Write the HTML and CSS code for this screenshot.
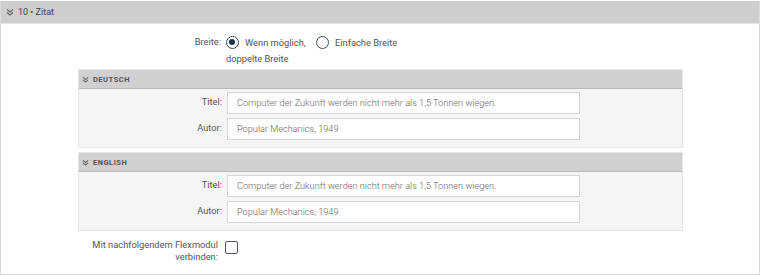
FILE: index.html
```html
<!DOCTYPE html>
<html lang="de">
  <head>
    <meta charset="UTF-8" />
    <meta name="viewport" content="width=device-width, initial-scale=1.0" />
    <title>Flexmodul Zitat</title>
    <link rel="stylesheet" href="styles.css">
  </head>
  <body>
    <div class="module">
      <div class="module-head">
        <svg class="chev" width="8" height="8" viewBox="0 0 8 8">
          <path d="M1 1.5 L4 4 L7 1.5 M1 4.5 L4 7 L7 4.5" fill="none" stroke="#666" stroke-width="1.1" />
        </svg>
        <span>10 • Zitat</span>
      </div>
      <div class="module-body">
        <div class="row row-width">
          <div class="label">Breite:</div>
          <div class="radios">
            <label class="option wide">
              <span class="radio checked"></span>Wenn möglich, doppelte Breite
            </label>
            <label class="option">
              <span class="radio"></span>Einfache Breite
            </label>
          </div>
        </div>

        <div class="lang">
          <div class="lang-head">
            <svg class="chev" width="7" height="7" viewBox="0 0 8 8">
              <path d="M1 1.5 L4 4 L7 1.5 M1 4.5 L4 7 L7 4.5" fill="none" stroke="#666" stroke-width="1.2" />
            </svg>
            <span>Deutsch</span>
          </div>
          <div class="lang-body">
            <div class="row">
              <div class="label">Titel:</div>
              <div class="input">Computer der Zukunft werden nicht mehr als 1,5 Tonnen wiegen.</div>
            </div>
            <div class="row">
              <div class="label">Autor:</div>
              <div class="input">Popular Mechanics, 1949</div>
            </div>
          </div>
        </div>

        <div class="lang">
          <div class="lang-head">
            <svg class="chev" width="7" height="7" viewBox="0 0 8 8">
              <path d="M1 1.5 L4 4 L7 1.5 M1 4.5 L4 7 L7 4.5" fill="none" stroke="#666" stroke-width="1.2" />
            </svg>
            <span>English</span>
          </div>
          <div class="lang-body">
            <div class="row">
              <div class="label">Titel:</div>
              <div class="input">Computer der Zukunft werden nicht mehr als 1,5 Tonnen wiegen.</div>
            </div>
            <div class="row">
              <div class="label">Autor:</div>
              <div class="input">Popular Mechanics, 1949</div>
            </div>
          </div>
        </div>

        <div class="row row-link">
          <div class="label">Mit nachfolgendem Flexmodul verbinden:</div>
          <span class="checkbox"></span>
        </div>
      </div>
    </div>
  </body>
</html>
```

FILE: styles.css
```css
* {
  margin: 0;
  padding: 0;
  box-sizing: border-box;
}

body {
  width: 761px;
  height: 276px;
  background: #fff;
  font-family: Roboto, "Liberation Sans", sans-serif;
  font-size: 9.3px;
  color: #444;
  padding-top: 1px;
}

.module {
  width: 760px;
  border: 1px solid #dcdcdc;
  border-top: none;
  height: 274px;
}

.module-head {
  height: 23px;
  background: #cecece;
  border-bottom: 1px solid #e2e2e2;
  display: flex;
  align-items: center;
  gap: 4px;
  padding-left: 5px;
  font-size: 9px;
  color: #444;
}

.module-body {
  padding: 10px 76px 0 77px;
}

.row {
  display: flex;
  align-items: flex-start;
}

.label {
  width: 148px;
  text-align: right;
  padding-right: 5px;
  color: #555;
  flex-shrink: 0;
}

.row-width {
  height: 35px;
}

.row-width .label {
  padding-top: 2px;
}

.radios {
  display: flex;
}

.option {
  display: block;
  line-height: 16px;
  color: #555;
  padding-top: 1px;
}

.option.wide {
  width: 90px;
}

.radio {
  display: inline-block;
  width: 13px;
  height: 13px;
  border: 1.5px solid #3b4a5c;
  border-radius: 50%;
  vertical-align: -3px;
  margin-right: 6px;
  position: relative;
}

.radio.checked::after {
  content: "";
  position: absolute;
  left: 2px;
  top: 2px;
  width: 6px;
  height: 6px;
  border-radius: 50%;
  background: #1f3148;
}

.lang {
  border: 1px solid #e6e6e6;
  background: #f5f5f5;
  margin-bottom: 4px;
}

.lang-head {
  height: 19px;
  background: #d0d0d0;
  border-bottom: 1px solid #b8b8b8;
  display: flex;
  align-items: center;
  gap: 4px;
  padding-left: 3px;
  font-size: 7.5px;
  font-weight: bold;
  text-transform: uppercase;
  letter-spacing: 0.5px;
  color: #555;
}

.lang-body {
  padding: 3px 0 7px;
  display: flex;
  flex-direction: column;
  gap: 4px;
}

.lang-body .label {
  padding-top: 4px;
}

.input {
  width: 353px;
  height: 22px;
  background: #fff;
  border: 1.5px solid #d6d6d6;
  padding: 0 9px;
  line-height: 19px;
  font-size: 9.2px;
  font-weight: 300;
  color: #666;
  white-space: nowrap;
  overflow: hidden;
}

.row-link {
  padding-top: 4px;
  line-height: 12px;
}

.row-link .label {
  width: 145px;
}

.checkbox {
  display: inline-block;
  width: 13px;
  height: 13px;
  border: 1.5px solid #4a5668;
  border-radius: 2px;
  margin-top: 2px;
  margin-left: 2px;
}
```
